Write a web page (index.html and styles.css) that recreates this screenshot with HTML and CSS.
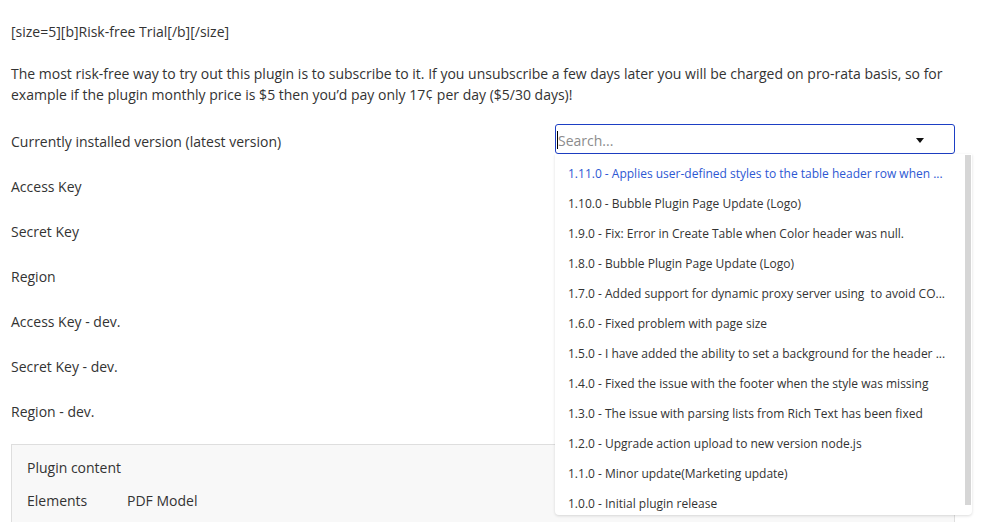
FILE: index.html
```html
<!DOCTYPE html>
<html>
<head>
<meta charset="utf-8">
<link rel="stylesheet" href="styles.css">
</head>
<body>
<div class="page">
  <div class="heading">[size=5][b]Risk-free Trial[/b][/size]</div>
  <p class="intro">The most risk-free way to try out this plugin is to subscribe to it. If you unsubscribe a few days later you will be charged on pro-rata basis, so for example if the plugin monthly price is $5 then you’d pay only 17¢ per day ($5/30 days)!</p>

  <div class="form">
    <div class="row">
      <div class="label">Currently installed version (latest version)</div>
      <div class="field">
        <div class="select">
          <span class="caret"></span><span class="placeholder">Search...</span>
          <span class="arrow"></span>
        </div>
        <div class="menu">
          <ul class="options">
            <li class="option active">1.11.0 - Applies user-defined styles to the table header row when ...</li>
            <li class="option">1.10.0 - Bubble Plugin Page Update (Logo)</li>
            <li class="option">1.9.0 - Fix: Error in Create Table when Color header was null.</li>
            <li class="option">1.8.0 - Bubble Plugin Page Update (Logo)</li>
            <li class="option">1.7.0 - Added support for dynamic proxy server using&nbsp; to avoid CO...</li>
            <li class="option">1.6.0 - Fixed problem with page size</li>
            <li class="option">1.5.0 - I have added the ability to set a background for the header ...</li>
            <li class="option">1.4.0 - Fixed the issue with the footer when the style was missing</li>
            <li class="option">1.3.0 - The issue with parsing lists from Rich Text has been fixed</li>
            <li class="option">1.2.0 - Upgrade action upload to new version node.js</li>
            <li class="option">1.1.0 - Minor update(Marketing update)</li>
            <li class="option">1.0.0 - Initial plugin release</li>
          </ul>
          <div class="thumb"></div>
        </div>
      </div>
    </div>
    <div class="row"><div class="label">Access Key</div></div>
    <div class="row"><div class="label">Secret Key</div></div>
    <div class="row"><div class="label">Region</div></div>
    <div class="row"><div class="label">Access Key - dev.</div></div>
    <div class="row"><div class="label">Secret Key - dev.</div></div>
    <div class="row"><div class="label">Region - dev.</div></div>
  </div>

  <div class="card">
    <div class="card-title">Plugin content</div>
    <div class="card-line"><span class="kind">Elements</span><span>PDF Model</span></div>
  </div>
</div>
</body>
</html>
```
FILE: styles.css
```css
html, body {
  margin: 0;
  padding: 0;
  background: #fff;
}
body {
  font-family: "Open Sans", "Liberation Sans", sans-serif;
  font-size: 14px;
  line-height: 21px;
  color: #333;
  overflow: hidden;
  height: 522px;
}
.page {
  width: 944px;
  padding: 21px 0 0 11px;
}
.heading {
  margin: 0 0 21px;
}
.intro {
  margin: 0 0 14px;
}
.form {
  display: flex;
  flex-direction: column;
}
.row {
  display: grid;
  grid-template-columns: 544px 400px;
  height: 45px;
  align-items: center;
}
.field {
  position: relative;
  align-self: start;
  padding-top: 5px;
}
.select {
  box-sizing: border-box;
  height: 30px;
  border: 1px solid #1d3fc4;
  border-radius: 3px;
  display: flex;
  align-items: center;
  padding-left: 1px;
  padding-top: 2px;
  background: #fff;
}
.caret {
  width: 1px;
  height: 18px;
  background: #000;
  margin-top: -1px;
}
.placeholder {
  color: #8c8c8c;
  flex: 1;
}
.arrow {
  width: 0;
  height: 0;
  border-left: 4px solid transparent;
  border-right: 4px solid transparent;
  border-top: 5px solid #111;
  margin-right: 30px;
}
.menu {
  position: absolute;
  top: 35px;
  left: 0;
  width: 417px;
  height: 361px;
  background: #fff;
  border-radius: 0 0 4px 4px;
  box-shadow: 0 1px 3px rgba(0, 0, 0, 0.14);
  overflow: hidden;
  z-index: 5;
}
.options {
  list-style: none;
  margin: 0;
  padding: 5px 0 0;
}
.option {
  height: 30px;
  line-height: 30px;
  padding-left: 13px;
  font-size: 12px;
  color: #333;
  white-space: nowrap;
  overflow: hidden;
}
.option.active {
  color: #2d58d3;
}
.thumb {
  position: absolute;
  top: 1px;
  right: 1px;
  width: 6px;
  height: 350px;
  background: #d6d6d6;
}
.card {
  margin-top: 10px;
  box-sizing: border-box;
  width: 944px;
  height: 90px;
  background: #f8f8f8;
  border: 1px solid #dedede;
  padding: 12px 15px 0;
}
.card-title {
  margin-bottom: 12px;
}
.card-line {
  display: flex;
}
.kind {
  width: 100px;
}
```
